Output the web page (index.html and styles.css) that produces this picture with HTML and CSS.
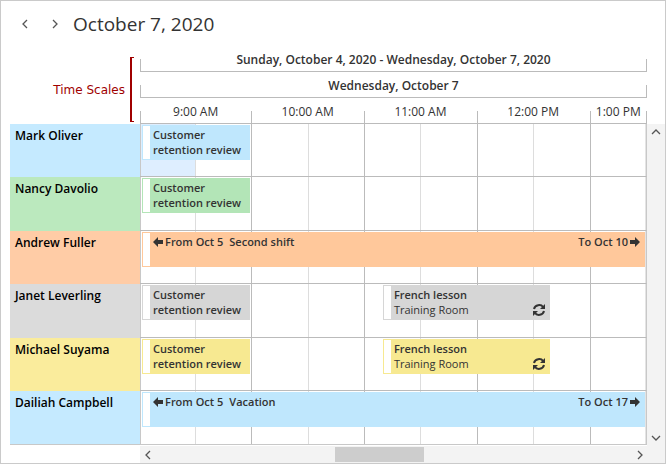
FILE: index.html
```html
<!DOCTYPE html>
<html lang="en">
<head>
    <meta charset="UTF-8">
    <meta name="viewport" content="width=device-width, initial-scale=1.0">
    <title>Scheduler - Timeline View</title>
    <link rel="stylesheet" href="styles.css">
</head>
<body>
    <svg class="sprite" aria-hidden="true">
        <symbol id="arrow-left" viewBox="0 0 10 10"><path d="M0 5 5 0V3H10V7H5V10Z"/></symbol>
        <symbol id="arrow-right" viewBox="0 0 10 10"><path d="M10 5 5 0V3H0V7H5V10Z"/></symbol>
        <symbol id="recurring" viewBox="0 0 12 12">
            <path d="M1 5C2 0.500 8 0 10 3" fill="none" stroke="currentColor" stroke-width="2"/>
            <path d="M12 0V5H7Z"/>
            <path d="M11 7C10 11.500 4 12 2 9" fill="none" stroke="currentColor" stroke-width="2"/>
            <path d="M0 12V7H5Z"/>
        </symbol>
        <symbol id="chevron-left" viewBox="0 0 6 10"><path d="M5 1 1 5 5 9"/></symbol>
        <symbol id="chevron-right" viewBox="0 0 6 10"><path d="M1 1 5 5 1 9"/></symbol>
        <symbol id="chevron-up" viewBox="0 0 10 6"><path d="M1 5 5 1 9 5"/></symbol>
        <symbol id="chevron-down" viewBox="0 0 10 6"><path d="M1 1 5 5 9 1"/></symbol>
    </svg>

    <div class="scheduler">
        <header class="toolbar">
            <button class="nav-button" type="button" aria-label="Previous day"><svg class="chevron"><use href="#chevron-left"/></svg></button>
            <button class="nav-button" type="button" aria-label="Next day"><svg class="chevron"><use href="#chevron-right"/></svg></button>
            <h1 class="title">October 7, 2020</h1>
        </header>

        <div class="scales">
            <div class="scales-note">
                <span>Time Scales</span>
                <span class="bracket"></span>
            </div>
            <div class="scale-rows">
                <div class="scale scale-wide">Sunday, October 4, 2020 - Wednesday, October 7, 2020</div>
                <div class="scale scale-wide">Wednesday, October 7</div>
                <div class="hours">
                    <div class="scale hour">9:00 AM</div>
                    <div class="scale hour">10:00 AM</div>
                    <div class="scale hour">11:00 AM</div>
                    <div class="scale hour">12:00 PM</div>
                    <div class="scale hour hour-half">1:00 PM</div>
                </div>
            </div>
        </div>

        <div class="main">
            <div class="rows">
                <div class="row blue">
                    <div class="resource">Mark Oliver</div>
                    <div class="lane">
                        <i class="slot selected"></i><i class="slot"></i><i class="slot"></i><i class="slot"></i><i class="slot"></i><i class="slot"></i><i class="slot"></i><i class="slot"></i><i class="slot"></i>
                        <div class="event" style="left: 0.4%; width: 21.3%">
                            <div class="event-body"><b>Customer retention review</b></div>
                        </div>
                    </div>
                </div>
                <div class="row green">
                    <div class="resource">Nancy Davolio</div>
                    <div class="lane">
                        <i class="slot"></i><i class="slot"></i><i class="slot"></i><i class="slot"></i><i class="slot"></i><i class="slot"></i><i class="slot"></i><i class="slot"></i><i class="slot"></i>
                        <div class="event" style="left: 0.4%; width: 21.3%">
                            <div class="event-body"><b>Customer retention review</b></div>
                        </div>
                    </div>
                </div>
                <div class="row orange">
                    <div class="resource">Andrew Fuller</div>
                    <div class="lane">
                        <i class="slot"></i><i class="slot"></i><i class="slot"></i><i class="slot"></i><i class="slot"></i><i class="slot"></i><i class="slot"></i><i class="slot"></i><i class="slot"></i>
                        <div class="event" style="left: 0.4%; width: 99.4%">
                            <div class="event-body event-long">
                                <svg class="arrow"><use href="#arrow-left"/></svg>
                                <b>From Oct 5</b>
                                <b class="subject">Second shift</b>
                                <b>To Oct 10</b>
                                <svg class="arrow"><use href="#arrow-right"/></svg>
                            </div>
                        </div>
                    </div>
                </div>
                <div class="row gray">
                    <div class="resource">Janet Leverling</div>
                    <div class="lane">
                        <i class="slot"></i><i class="slot"></i><i class="slot"></i><i class="slot"></i><i class="slot"></i><i class="slot"></i><i class="slot"></i><i class="slot"></i><i class="slot"></i>
                        <div class="event" style="left: 0.4%; width: 21.3%">
                            <div class="event-body"><b>Customer retention review</b></div>
                        </div>
                        <div class="event" style="left: 48%; width: 33%">
                            <div class="event-body"><b>French lesson</b><br>Training Room</div>
                            <svg class="recurring"><use href="#recurring"/></svg>
                        </div>
                    </div>
                </div>
                <div class="row yellow">
                    <div class="resource">Michael Suyama</div>
                    <div class="lane">
                        <i class="slot"></i><i class="slot"></i><i class="slot"></i><i class="slot"></i><i class="slot"></i><i class="slot"></i><i class="slot"></i><i class="slot"></i><i class="slot"></i>
                        <div class="event" style="left: 0.4%; width: 21.3%">
                            <div class="event-body"><b>Customer retention review</b></div>
                        </div>
                        <div class="event" style="left: 48%; width: 33%">
                            <div class="event-body"><b>French lesson</b><br>Training Room</div>
                            <svg class="recurring"><use href="#recurring"/></svg>
                        </div>
                    </div>
                </div>
                <div class="row blue">
                    <div class="resource">Dailiah Campbell</div>
                    <div class="lane">
                        <i class="slot"></i><i class="slot"></i><i class="slot"></i><i class="slot"></i><i class="slot"></i><i class="slot"></i><i class="slot"></i><i class="slot"></i><i class="slot"></i>
                        <div class="event" style="left: 0.4%; width: 99.4%">
                            <div class="event-body event-long">
                                <svg class="arrow"><use href="#arrow-left"/></svg>
                                <b>From Oct 5</b>
                                <b class="subject">Vacation</b>
                                <b>To Oct 17</b>
                                <svg class="arrow"><use href="#arrow-right"/></svg>
                            </div>
                        </div>
                    </div>
                </div>
            </div>
            <div class="scrollbar vertical">
                <button class="scroll-button" type="button" aria-label="Scroll up"><svg class="chevron-flat"><use href="#chevron-up"/></svg></button>
                <button class="scroll-button" type="button" aria-label="Scroll down"><svg class="chevron-flat"><use href="#chevron-down"/></svg></button>
            </div>
        </div>

        <div class="footer">
            <div class="scrollbar horizontal">
                <button class="scroll-button" type="button" aria-label="Scroll left"><svg class="chevron"><use href="#chevron-left"/></svg></button>
                <div class="track">
                    <div class="thumb" style="margin-left: 37.7%; width: 18.7%"></div>
                </div>
                <button class="scroll-button" type="button" aria-label="Scroll right"><svg class="chevron"><use href="#chevron-right"/></svg></button>
            </div>
            <div class="corner"></div>
        </div>
    </div>
</body>
</html>
```

FILE: styles.css
```css
* {
    box-sizing: border-box;
}

body {
    margin: 0;
    font-family: "Open Sans", "Noto Sans", sans-serif;
    font-size: 12px;
    color: #333;
    background: #fff;
}

button {
    display: flex;
    align-items: center;
    justify-content: center;
    padding: 0;
    border: none;
    background: none;
}

b {
    font-weight: 600;
}

.sprite {
    display: none;
}

.scheduler {
    min-height: 100vh;
    padding-left: 9px;
    border: 1px solid #cacaca;
}

/* Toolbar */
.toolbar {
    display: flex;
    align-items: center;
    height: 45px;
}

.nav-button {
    width: 30px;
    height: 30px;
}

.title {
    margin: 0;
    padding-left: 3px;
    font-size: 19px;
    font-weight: normal;
}

.chevron,
.chevron-flat {
    fill: none;
    stroke: #555;
    stroke-width: 1.3;
}

.chevron {
    width: 6px;
    height: 10px;
}

.chevron-flat {
    width: 10px;
    height: 6px;
}

/* Time scales */
.scales {
    display: grid;
    grid-template-columns: 130px 1fr;
    padding-right: 18px;
}

.scales-note {
    display: flex;
    align-items: center;
    justify-content: flex-end;
    gap: 5px;
    padding: 11px 6px 2px 0;
    font-family: "DejaVu Sans", sans-serif;
    color: #a00000;
}

.bracket {
    width: 4px;
    height: 65px;
    border: 1px solid #a00000;
    border-left-width: 2px;
    border-right: none;
}

.scale {
    position: relative;
    height: 26px;
    border-bottom: 1px solid #bbb;
    line-height: 28px;
    text-align: center;
    white-space: nowrap;
}

/* short ticks at both ends of a scale */
.scale::before {
    content: "";
    position: absolute;
    left: 0;
    right: 0;
    bottom: 0;
    height: 12px;
    border-left: 1px solid #bbb;
}

.scale-wide {
    font-weight: 600;
}

.scale-wide::before,
.hour:last-child::before {
    border-right: 1px solid #bbb;
}

.hours,
.lane {
    display: grid;
    grid-template-columns: 110fr repeat(8, 113fr);
}

.hour {
    grid-column: span 2;
}

.hour-half {
    grid-column: span 1;
    margin-right: -1px;
}

.hours {
    padding-right: 1px;
}

/* Resources and lanes */
.main {
    display: grid;
    grid-template-columns: 1fr 18px;
}

.rows {
    display: grid;
    grid-template-rows: repeat(3, 53px 54px);
}

.row {
    display: grid;
    grid-template-columns: 130px 1fr;
}

.resource {
    padding: 4px 5px;
    background: var(--head);
    color: #000;
    font-weight: 600;
    line-height: 16px;
}

.lane {
    position: relative;
    border-right: 1px solid #c8c8c8;
    border-bottom: 1px solid #bbb;
}

.row:last-child .resource,
.row:last-child .lane {
    border-bottom: 1px solid #c8c8c8;
}

.slot {
    border-left: 1px solid #ddd;
}

.slot:nth-child(odd) {
    border-left-color: #bbb;
}

.slot:first-child {
    border-left-color: #c8c8c8;
}

.slot:nth-child(9) {
    border-right: 1px solid #e4e4e4;
}

.selected {
    background: #deeeff;
}

.blue {
    --head: #c5eaff;
    --event: #bfe7fd;
}

.green {
    --head: #bbe9be;
    --event: #b3e5b7;
}

.orange {
    --head: #ffcca6;
    --event: #ffc89b;
}

.gray {
    --head: #dbdbdb;
    --event: #d6d6d6;
}

.yellow {
    --head: #faec9c;
    --event: #f7e991;
}

/* Events */
.event {
    position: absolute;
    top: 1px;
    height: 35px;
    padding-left: 7px;
    border: 1px solid var(--event);
    background: #fff;
}

.event-body {
    height: 33px;
    padding: 1px 0 0 3px;
    background: var(--event);
    font-size: 11px;
    line-height: 15px;
}

.event-long {
    display: flex;
    gap: 2px;
    padding-right: 4px;
}

.subject {
    flex: 1;
    padding-left: 4px;
}

.arrow {
    width: 10px;
    height: 10px;
    margin-top: 3px;
    fill: #333;
}

.recurring {
    position: absolute;
    right: 4px;
    bottom: 3px;
    width: 12px;
    height: 12px;
    fill: #333;
}

/* Scrollbars */
.scrollbar {
    display: flex;
    justify-content: space-between;
    background: #f3f3f3;
}

.vertical {
    flex-direction: column;
}

.scroll-button {
    width: 15px;
    height: 15px;
}

.vertical .scroll-button {
    width: 18px;
}

.footer {
    display: grid;
    grid-template-columns: 1fr 18px;
    padding-left: 130px;
}

.horizontal {
    align-items: center;
    height: 18px;
    border-top: 1px solid #fff;
}

.track {
    flex: 1;
}

.thumb {
    height: 15px;
    background: #cdcdcd;
}

.corner {
    background: #f3f3f3;
}
```
